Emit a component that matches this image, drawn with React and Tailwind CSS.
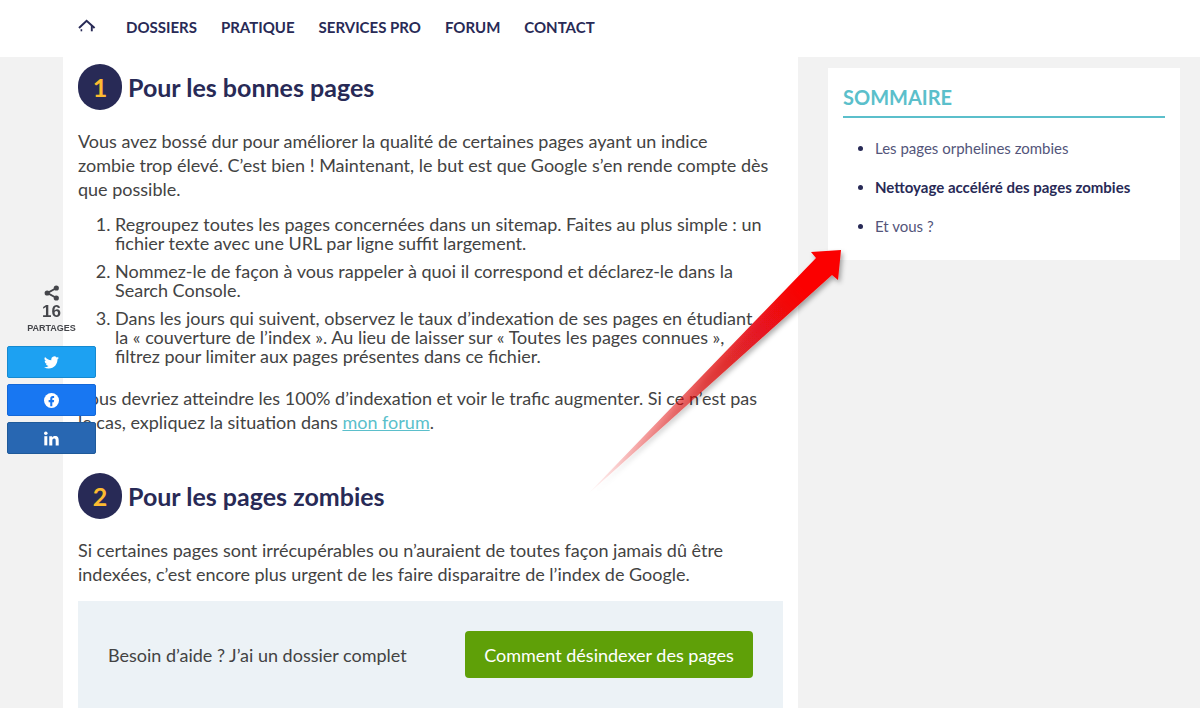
const navItems = ['Dossiers', 'Pratique', 'Services pro', 'Forum', 'Contact'];

function HomeIcon() {
  return (
    <svg width="18" height="14" viewBox="0 0 18 14" fill="none" stroke="#282a56" aria-hidden="true">
      <path d="M1 9 L8.6 1.8 L16.6 9" strokeWidth="2" />
      <path d="M13.8 7 V12.3" strokeWidth="1.9" />
      <path d="M3.4 10.2 V12.3" strokeWidth="1.6" />
    </svg>
  );
}

function ShareIcon() {
  return (
    <svg width="16" height="16" viewBox="0 0 16 16" fill="#45464b" aria-hidden="true">
      <path d="M12.5 3 L3.5 8 L12.5 13" fill="none" stroke="#45464b" strokeWidth="2" />
      <circle cx="12.3" cy="3" r="2.6" />
      <circle cx="3.2" cy="8" r="2.6" />
      <circle cx="12.3" cy="13" r="2.6" />
    </svg>
  );
}

function TwitterIcon() {
  return (
    <svg width="15" height="15" viewBox="0 0 24 24" fill="#fff" aria-hidden="true">
      <path d="M23.95 4.57a10 10 0 0 1-2.82.77 4.96 4.96 0 0 0 2.16-2.72c-.95.55-2 .95-3.13 1.18a4.92 4.92 0 0 0-8.38 4.48C7.69 8.1 4.07 6.13 1.64 3.16a4.92 4.92 0 0 0 1.52 6.57 4.9 4.9 0 0 1-2.23-.61v.06a4.92 4.92 0 0 0 3.95 4.83 5 5 0 0 1-2.21.08 4.94 4.94 0 0 0 4.6 3.42A9.87 9.87 0 0 1 0 19.54a14 14 0 0 0 7.55 2.21c9.05 0 14-7.5 14-13.98 0-.21 0-.42-.02-.63a9.94 9.94 0 0 0 2.42-2.57z" />
    </svg>
  );
}

function FacebookIcon() {
  return (
    <svg width="15" height="15" viewBox="0 0 24 24" aria-hidden="true">
      <circle cx="12" cy="12" r="12" fill="#fff" />
      <path d="M10 21 V14.6 H7.4 V11.2 H10 V9 C10 6.2 11.6 4.8 14 4.8 C15 4.8 16.2 5 16.2 5 V7.8 H14.8 C13.6 7.8 13.3 8.6 13.3 9.4 V11.2 H16.2 L15.7 14.6 H13.3 V21 Z" fill="#1877f2" />
    </svg>
  );
}

function LinkedinIcon() {
  return (
    <svg width="15" height="15" viewBox="0 0 24 24" fill="#fff" aria-hidden="true">
      <circle cx="2.9" cy="3.6" r="2.8" />
      <path d="M.5 8.3 H5.3 V23 H.5 Z" />
      <path d="M8.4 8.3 H13 V10.3 C13.7 9 15.3 7.9 17.7 7.9 C22.5 7.9 23.5 11 23.5 15 V23 H18.7 V15.9 C18.7 14.2 18.6 12 16.3 12 C13.8 12 13.3 13.8 13.3 15.8 V23 H8.4 Z" />
    </svg>
  );
}

function Step({ number, children }) {
  return (
    <h2 className="flex items-center gap-[6px] text-[25px] leading-8 font-bold text-[#282a56]">
      <span className="flex h-[46px] w-11 items-center justify-center rounded-full bg-[#282a56] text-[#fdbb30]">
        {number}
      </span>
      {children}
    </h2>
  );
}

function ShareBar() {
  const button = 'flex h-8 w-full items-center justify-center rounded-xs border';
  return (
    <aside aria-label="Partager" className="fixed top-[285px] left-[7px] w-[89px]">
      <div className="flex flex-col items-center font-['Liberation_Sans',sans-serif] font-bold text-[#45464b]">
        <ShareIcon />
        <span className="pt-px text-[17px] leading-5">16</span>
        <span className="text-[9px] leading-3">PARTAGES</span>
      </div>
      <div className="mt-3 flex flex-col gap-[6px]">
        <button type="button" aria-label="Twitter" className={`${button} border-[#168ad0] bg-[#1da1f2]`}><TwitterIcon /></button>
        <button type="button" aria-label="Facebook" className={`${button} border-[#1468d8] bg-[#1877f2]`}><FacebookIcon /></button>
        <button type="button" aria-label="LinkedIn" className={`${button} border-[#1f5a9a] bg-[#2867b2]`}><LinkedinIcon /></button>
      </div>
    </aside>
  );
}

function Arrow() {
  return (
    <svg className="pointer-events-none absolute top-[240px] left-[580px]" width="280" height="265" viewBox="0 0 280 265" aria-hidden="true">
      <defs>
        <linearGradient id="fade" gradientUnits="userSpaceOnUse" x1="8" y1="255" x2="225" y2="50">
          <stop offset="0" stopColor="#e80000" stopOpacity="0" />
          <stop offset="0.25" stopColor="#e80000" stopOpacity="0.35" />
          <stop offset="0.55" stopColor="#de0508" stopOpacity="0.68" />
          <stop offset="0.8" stopColor="#e80508" stopOpacity="0.88" />
          <stop offset="1" stopColor="#fb0505" />
        </linearGradient>
        <filter id="shadow" x="-10%" y="-10%" width="120%" height="120%">
          <feDropShadow dx="2" dy="3" stdDeviation="2.5" floodColor="#000" floodOpacity="0.35" />
        </filter>
      </defs>
      <path d="M7 255 L236 18 L231 12 L261 10 L258 40 L252 35 Z" fill="url(#fade)" filter="url(#shadow)" />
    </svg>
  );
}

export default function App() {
  return (
    <div className="relative flex min-h-screen flex-col bg-[#f2f2f2] font-['Lato',sans-serif] text-[#434343]">
      <header className="bg-white pl-[78px]">
        <nav className="flex h-[57px] items-center gap-6 pb-[2px] text-[15px] font-bold text-[#282a56] uppercase">
          <a href="#accueil" aria-label="Accueil" className="mr-[6px] pb-1"><HomeIcon /></a>
          {navItems.map((item) => (
            <a key={item} href="#menu">{item}</a>
          ))}
        </nav>
      </header>

      <div className="grid flex-1 grid-cols-[735fr_352fr] items-start gap-[30px] pr-5 pl-[63px]">
        <main className="self-stretch bg-white px-[15px] pt-[7px] text-lg leading-6">
          <Step number="1">Pour les bonnes pages</Step>
          <p className="mt-[19px]">
            Vous avez bossé dur pour améliorer la qualité de certaines pages ayant un indice<br />
            zombie trop élevé. C’est bien ! Maintenant, le but est que Google s’en rende compte dès<br />
            que possible.
          </p>
          <ol className="mt-[14px] flex list-decimal flex-col gap-[9px] pl-[37px] leading-[19px]">
            <li>
              Regroupez toutes les pages concernées dans un sitemap. Faites au plus simple : un<br />
              fichier texte avec une URL par ligne suffit largement.
            </li>
            <li>
              Nommez-le de façon à vous rappeler à quoi il correspond et déclarez-le dans la<br />
              Search Console.
            </li>
            <li>
              Dans les jours qui suivent, observez le taux d’indexation de ses pages en étudiant<br />
              la « couverture de l’index ». Au lieu de laisser sur « Toutes les pages connues »,<br />
              filtrez pour limiter aux pages présentes dans ce fichier.
            </li>
          </ol>
          <p className="mt-5">
            Vous devriez atteindre les 100% d’indexation et voir le trafic augmenter. Si ce n’est pas<br />
            le cas, expliquez la situation dans <a href="#forum" className="text-[#5bbfcb] underline">mon forum</a>.
          </p>
          <div className="mt-[39px]">
            <Step number="2">Pour les pages zombies</Step>
          </div>
          <p className="mt-[19px]">
            Si certaines pages sont irrécupérables ou n’auraient de toutes façon jamais dû être<br />
            indexées, c’est encore plus urgent de les faire disparaitre de l’index de Google.
          </p>
          <div className="mt-[15px] flex items-center justify-between bg-[#ecf2f6] p-[30px]">
            <span>Besoin d’aide ? J’ai un dossier complet</span>
            <a href="#dossier" className="flex h-[47px] w-72 items-center justify-center rounded bg-[#5fa008] text-white">
              Comment désindexer des pages
            </a>
          </div>
        </main>

        <aside className="mt-[11px] bg-white px-[15px] pt-4 pb-[22px] text-[#282a56]">
          <h2 className="border-b-2 border-[#5bbfcb] pb-[6px] text-xl leading-[26px] font-bold text-[#5bbfcb]">SOMMAIRE</h2>
          <ul className="mt-[18px] flex list-disc flex-col gap-[15px] pl-8 text-[15px] leading-6">
            <li><a href="#orphelines" className="text-[#53557a]">Les pages orphelines zombies</a></li>
            <li><a href="#nettoyage" className="font-bold">Nettoyage accéléré des pages zombies</a></li>
            <li><a href="#vous" className="text-[#53557a]">Et vous ?</a></li>
          </ul>
        </aside>
      </div>

      <ShareBar />
      <Arrow />
    </div>
  );
}
